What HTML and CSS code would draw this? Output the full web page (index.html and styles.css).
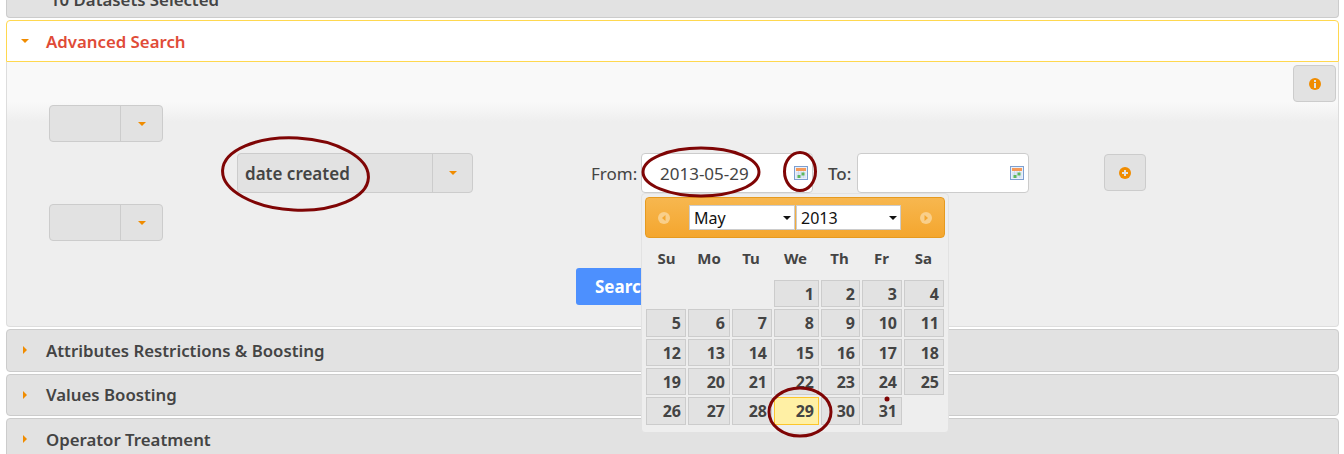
FILE: index.html
```html
<!DOCTYPE html>
<html lang="en">
<head>
    <meta charset="UTF-8">
    <title>Advanced Search</title>
    <link rel="stylesheet" href="styles.css">
</head>
<body>
    <div class="panels">
        <div class="head head-cut"><span class="head-text">10 Datasets Selected</span></div>

        <div class="head head-open"><span class="tri-down"></span><span class="head-text">Advanced Search</span></div>
        <div class="content">
            <div class="row-info">
                <button class="icon-btn info-btn">
                    <svg width="14" height="14" viewBox="0 0 14 14"><circle cx="7" cy="7" r="6" fill="#f08c00"/><rect x="6" y="3" width="2" height="2" fill="#e2e2e2"/><rect x="6" y="6" width="2" height="5" fill="#e2e2e2"/></svg>
                </button>
            </div>
            <div class="combo combo-small"><div class="combo-val"></div><div class="combo-arrow"><span class="tri-down"></span></div></div>
            <div class="row-main">
                <div class="combo combo-big"><div class="combo-val">date created</div><div class="combo-arrow"><span class="tri-down"></span></div></div>
                <label class="lbl lbl-from">From:</label>
                <div class="date-input date-from">
                    <span>2013-05-29</span>
                    <svg class="cal-icon" width="14" height="14" viewBox="0 0 14 14"><rect x="0.5" y="0.5" width="13" height="13" fill="#eaf1fb" stroke="#7d9fd0"/><rect x="2" y="2" width="10" height="3" fill="#f59a5a"/><path d="M2 7h10M2 9h10M2 11h10M4.500 5v7M7 5v7M9.500 5v7" stroke="#c5d3e8" stroke-width="0.7"/><rect x="3.500" y="9" width="3" height="3" fill="#5cb85c"/><rect x="7.500" y="6.500" width="3" height="3" fill="#5cb85c"/></svg>
                </div>
                <label class="lbl lbl-to">To:</label>
                <div class="date-input date-to">
                    <svg class="cal-icon" width="14" height="14" viewBox="0 0 14 14"><rect x="0.5" y="0.5" width="13" height="13" fill="#eaf1fb" stroke="#7d9fd0"/><rect x="2" y="2" width="10" height="3" fill="#f59a5a"/><path d="M2 7h10M2 9h10M2 11h10M4.500 5v7M7 5v7M9.500 5v7" stroke="#c5d3e8" stroke-width="0.7"/><rect x="3.500" y="9" width="3" height="3" fill="#5cb85c"/><rect x="7.500" y="6.500" width="3" height="3" fill="#5cb85c"/></svg>
                </div>
                <button class="icon-btn add-btn">
                    <svg width="12" height="12" viewBox="0 0 12 12"><circle cx="6" cy="6" r="6" fill="#f08c00"/><path d="M5 3h2v2h2v2H7v2H5V7H3V5h2z" fill="#e2e2e2"/></svg>
                </button>
            </div>
            <div class="combo combo-small combo-third"><div class="combo-val"></div><div class="combo-arrow"><span class="tri-down"></span></div></div>
            <div class="row-search"><button class="search-btn">Search</button></div>
        </div>

        <div class="head"><span class="tri-right"></span><span class="head-text">Attributes Restrictions &amp; Boosting</span></div>
        <div class="head"><span class="tri-right"></span><span class="head-text">Values Boosting</span></div>
        <div class="head"><span class="tri-right"></span><span class="head-text">Operator Treatment</span></div>
    </div>

    <!-- datepicker popup -->
    <div class="picker">
        <div class="picker-head">
            <svg class="nav-icon" width="12" height="12" viewBox="0 0 12 12"><circle cx="6" cy="6" r="6" fill="#f9cf8a"/><path d="M7.500 3v6L4 6z" fill="#f4a62e"/></svg>
            <div class="picker-selects">
                <div class="cal-select cal-month">May<i></i></div>
                <div class="cal-select cal-year">2013<i></i></div>
            </div>
            <svg class="nav-icon" width="12" height="12" viewBox="0 0 12 12"><circle cx="6" cy="6" r="6" fill="#f9cf8a"/><path d="M4.500 3v6L8 6z" fill="#f4a62e"/></svg>
        </div>
        <div class="weekdays">
            <span>Su</span><span>Mo</span><span>Tu</span><span>We</span><span>Th</span><span>Fr</span><span>Sa</span>
        </div>
        <div class="days">
            <span class="blank"></span><span class="blank"></span><span class="blank"></span>
            <a>1</a><a>2</a><a>3</a><a>4</a>
            <a>5</a><a>6</a><a>7</a><a>8</a><a>9</a><a>10</a><a>11</a>
            <a>12</a><a>13</a><a>14</a><a>15</a><a>16</a><a>17</a><a>18</a>
            <a>19</a><a>20</a><a>21</a><a>22</a><a>23</a><a>24</a><a>25</a>
            <a>26</a><a>27</a><a>28</a><a class="today">29</a><a>30</a><a>31</a>
        </div>
    </div>

    <!-- hand drawn red marks -->
    <svg class="marks" width="1344" height="454" viewBox="0 0 1344 454">
        <g fill="none" stroke="#7f0505" stroke-width="3">
            <ellipse cx="295.500" cy="174" rx="73" ry="36" transform="rotate(3 295.500 174)"/>
            <ellipse cx="701" cy="172" rx="58" ry="24"/>
            <ellipse cx="800" cy="171.500" rx="15.500" ry="19"/>
            <ellipse cx="800" cy="412" rx="31" ry="24"/>
        </g>
        <circle cx="887" cy="399" r="2.500" fill="#7f0505"/>
    </svg>
</body>
</html>
```

FILE: styles.css
```css
*{
    margin: 0;
    padding: 0;
    box-sizing: border-box;
}
html, body{
    height: 454px;
    overflow: hidden;
}
body{
    position: relative;
    background-color: #fff;
    font-family: "Noto Sans", "Liberation Sans", sans-serif;
    color: #444;
}
.panels{
    padding: 0 5px 0 6px;
}
.head{
    display: flex;
    align-items: center;
    height: 42.5px;
    margin-bottom: 2px;
    padding-left: 14px;
    background-color: #e2e2e2;
    border: solid 1px #ccc;
    border-radius: 4px;
}
.head-text{
    font-size: 16.8px;
    font-weight: 600;
    margin-left: 17px;
}
.head-cut{
    height: 18px;
    align-items: flex-end;
    overflow: hidden;
    border-radius: 0 0 4px 4px;
    border-top: none;
    padding-bottom: 6px;
}
.head-cut .head-text{
    margin-left: 29px;
}
.head-open{
    height: 42px;
    margin-bottom: 0;
    background-color: #fff;
    border-color: #ffd84f;
    border-radius: 4px 4px 0 0;
}
.head-open .head-text{
    color: #e04b37;
}
.tri-down{
    display: inline-block;
    width: 0;
    height: 0;
    border-left: 4px solid transparent;
    border-right: 4px solid transparent;
    border-top: 4px solid #f08c00;
}
.tri-right{
    display: inline-block;
    width: 0;
    height: 0;
    margin-left: 2px;
    margin-right: 2px;
    border-top: 4px solid transparent;
    border-bottom: 4px solid transparent;
    border-left: 4px solid #f08c00;
}
.content{
    height: 265px;
    margin-bottom: 2px;
    padding: 3px 2px 0 42px;
    background: linear-gradient(#f9f9f9 0, #f9f9f9 40px, #eee 60px);
    border: solid 1px #ddd;
    border-top: none;
    border-radius: 0 0 4px 4px;
}
.row-info{
    display: flex;
    justify-content: flex-end;
}
.icon-btn{
    display: flex;
    align-items: center;
    justify-content: center;
    background-color: #e2e2e2;
    border: solid 1px #ccc;
    border-radius: 4px;
}
.info-btn{
    width: 43px;
    height: 37px;
}
.add-btn{
    width: 42px;
    height: 37px;
    margin-left: 75px;
    margin-bottom: 1px;
}
.combo{
    display: flex;
    background-color: #e2e2e2;
    border: solid 1px #ccc;
    border-radius: 4px;
}
.combo-val{
    flex: 1;
    display: flex;
    align-items: center;
    padding-left: 7px;
    font-size: 17px;
    font-weight: 600;
}
.combo-arrow{
    display: flex;
    align-items: center;
    justify-content: center;
    border-left: solid 1px #ccc;
}
.combo-small{
    width: 114px;
    height: 37px;
    margin-top: 3px;
}
.combo-small .combo-arrow{
    width: 42px;
}
.combo-third{
    margin-top: 11px;
}
.combo-big{
    width: 236px;
    height: 40px;
    margin-left: 188px;
}
.combo-big .combo-arrow{
    width: 40px;
}
.row-main{
    display: flex;
    align-items: center;
    margin-top: 11px;
}
.lbl{
    font-size: 17px;
}
.lbl-from{
    margin-left: 118px;
    width: 50px;
}
.lbl-to{
    margin-left: 15px;
    width: 29px;
    font-weight: 500;
}
.date-input{
    display: flex;
    align-items: center;
    justify-content: space-between;
    width: 172px;
    height: 40px;
    padding: 0 4px 0 18px;
    background-color: #fff;
    border: solid 1px #ccc;
    border-radius: 4px;
    font-size: 17px;
}
.date-to{
    justify-content: flex-end;
}
.row-search{
    margin-top: 27px;
    padding-left: 527px;
}
.search-btn{
    width: 120px;
    height: 37px;
    padding-left: 19px;
    text-align: left;
    background-color: #4d90fe;
    border: none;
    border-radius: 3px;
    color: #fff;
    font-family: inherit;
    font-size: 17px;
    font-weight: 700;
}

/* datepicker */
.picker{
    position: absolute;
    left: 641px;
    top: 193px;
    width: 308px;
    height: 240px;
    padding: 3px;
    background-color: #eee;
    border: solid 1px #e2e2e2;
    border-radius: 4px;
}
.picker-head{
    display: flex;
    align-items: center;
    justify-content: space-between;
    height: 41px;
    padding: 0 12px;
    background: linear-gradient(#f7b74f, #f4a62e);
    border: solid 1px #e69a1f;
    border-radius: 4px;
}
.picker-selects{
    display: flex;
    gap: 1px;
}
.cal-select{
    position: relative;
    height: 25px;
    padding-left: 4px;
    background-color: #fff;
    border: solid 1px #ccc;
    color: #111;
    font-size: 16px;
    line-height: 24px;
}
.cal-select i{
    position: absolute;
    right: 3px;
    top: 10px;
    border-left: 4px solid transparent;
    border-right: 4px solid transparent;
    border-top: 4px solid #111;
}
.cal-month{
    width: 106px;
}
.cal-year{
    width: 105px;
}
.weekdays{
    display: grid;
    grid-template-columns: 43px 42px 42px 47px 41px 43px 41px;
    margin-top: 10px;
    height: 32px;
    font-size: 15px;
    font-weight: 700;
    text-align: center;
}
.days{
    display: grid;
    grid-template-columns: 40px 42px 40px 45px 39px 40px 40px;
    grid-template-rows: 27px 28px 27px 27px 28px;
    gap: 2px;
    margin-left: 1px;
}
.days a{
    padding-right: 4px;
    background-color: #e2e2e2;
    border: solid 1px #ccc;
    font-size: 16px;
    font-weight: 700;
    line-height: 27px;
    text-align: right;
}
.days .today{
    background-color: #fff0a5;
    border-color: #fcc62c;
}
.marks{
    position: absolute;
    left: 0;
    top: 0;
    pointer-events: none;
}
```
